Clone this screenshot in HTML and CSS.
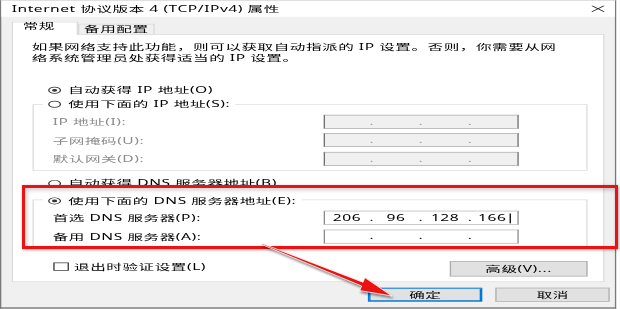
FILE: index.html
```html
<!DOCTYPE html>
<html lang="zh-CN">
<head>
  <meta charset="UTF-8">
  <title>Internet 协议版本 4 (TCP/IPv4) 属性</title>
  <link rel="stylesheet" href="styles.css">
</head>
<body>
  <div class="screen">
    <div class="dialog">
      <div class="titlebar">
        <span>Internet 协议版本 4 (TCP/IPv4) 属性</span>
        <svg class="close" width="10" height="9" viewBox="0 0 10 9"><path d="M0 0L10 9M10 0L0 9" stroke="#222" stroke-width="1" fill="none"/></svg>
      </div>

      <div class="tabs">
        <div class="tab active">常规</div>
        <div class="tab">备用配置</div>
      </div>

      <div class="panel">
        <p class="intro">如果网络支持此功能，则可以获取自动指派的 IP 设置。否则，你需要从网<br>络系统管理员处获得适当的 IP 设置。</p>

        <div class="option first"><span class="choice"><span class="radio on"></span>自动获得 IP 地址(O)</span></div>
        <fieldset class="group">
          <legend><span class="choice"><span class="radio"></span>使用下面的 IP 地址(S):</span></legend>
          <div class="rows">
            <div class="field off">
              <span>IP 地址(I):</span>
              <div class="ip"><span class="seg"></span><span class="dot">.</span><span class="seg"></span><span class="dot">.</span><span class="seg"></span><span class="dot">.</span><span class="seg"></span></div>
            </div>
            <div class="field off">
              <span>子网掩码(U):</span>
              <div class="ip"><span class="seg"></span><span class="dot">.</span><span class="seg"></span><span class="dot">.</span><span class="seg"></span><span class="dot">.</span><span class="seg"></span></div>
            </div>
            <div class="field off">
              <span>默认网关(D):</span>
              <div class="ip"><span class="seg"></span><span class="dot">.</span><span class="seg"></span><span class="dot">.</span><span class="seg"></span><span class="dot">.</span><span class="seg"></span></div>
            </div>
          </div>
        </fieldset>

        <div class="option dns-auto"><span class="choice"><span class="radio"></span>自动获得 DNS 服务器地址(B)</span></div>
        <fieldset class="group dns">
          <legend><span class="choice"><span class="radio on"></span>使用下面的 DNS 服务器地址(E):</span></legend>
          <div class="rows">
            <div class="field">
              <span>首选 DNS 服务器(P):</span>
              <div class="ip"><span class="seg">206</span><span class="dot">.</span><span class="seg">96</span><span class="dot">.</span><span class="seg">128</span><span class="dot">.</span><span class="seg">166<i class="caret"></i></span></div>
            </div>
            <div class="field">
              <span>备用 DNS 服务器(A):</span>
              <div class="ip"><span class="seg"></span><span class="dot">.</span><span class="seg"></span><span class="dot">.</span><span class="seg"></span><span class="dot">.</span><span class="seg"></span></div>
            </div>
          </div>
        </fieldset>

        <div class="panel-bottom">
          <span class="check"><span class="box"></span>退出时验证设置(L)</span>
          <button type="button" class="btn advanced">高级(V)...</button>
        </div>
      </div>

      <div class="buttons">
        <button type="button" class="btn ok">确定</button>
        <button type="button" class="btn">取消</button>
      </div>
    </div>

    <!-- anotacao por cima do print -->
    <div class="highlight"></div>
    <svg class="arrow" width="620" height="309" viewBox="0 0 620 309">
      <polygon points="262.2,243.5 363,282.2 364.9,277.6 392,296 359.7,290.6 361.6,286 261.8,244.5" fill="#ee1111" stroke="#fff" stroke-width="0.8"/>
    </svg>
  </div>
</body>
</html>
```

FILE: styles.css
```css
* {
  box-sizing: border-box;
}

body {
  margin: 0;
  background: #fff;
  font-family: "Noto Sans", "Noto Sans CJK SC", sans-serif;
  font-size: 12px;
  letter-spacing: 0.4px;
  color: #000;
}

.screen {
  position: relative;
  width: 620px;
  height: 309px;
  overflow: hidden;
}

/* o print original foi esticado na horizontal e achatado na vertical */
.dialog {
  width: 474px;
  height: 441px;
  display: flex;
  flex-direction: column;
  background: #f0f0f0;
  border: 1px solid #7a7a7a;
  border-top-color: #c4c4c4;
  border-bottom-width: 2px;
  transform: scale(1.3, 0.7);
  transform-origin: 0 0;
}

.titlebar {
  height: 23px;
  flex: none;
  display: flex;
  align-items: center;
  justify-content: space-between;
  padding: 0 8px;
  background: #fff;
  line-height: 16px;
}

.tabs {
  display: flex;
  align-items: flex-end;
  height: 18.2px;
  margin: 7.4px 0 -1px 7.5px;
  position: relative;
  z-index: 1;
  flex: none;
}

.tab {
  width: 59px;
  height: 15.3px;
  line-height: 12px;
  text-align: center;
  background: #f0f0f0;
  border: 1px solid #d9d9d9;
}

.tab.active {
  width: 51.5px;
  height: 18.2px;
  text-align: left;
  padding-left: 8px;
  background: #fff;
  border-bottom: none;
}

.panel {
  flex: none;
  height: 354.4px;
  margin: 0 7.6px 0 7.5px;
  padding: 9px 12.5px 0 15px;
  background: #fff;
  border: 1px solid #d9d9d9;
}

.intro {
  margin: 0;
  line-height: 16px;
}

.option {
  height: 16px;
  padding-left: 12px;
  display: flex;
  align-items: center;
}

.option.first {
  margin-top: 30px;
}

.option.dns-auto {
  margin-top: 10.5px;
}

.choice {
  display: inline-flex;
  align-items: center;
  gap: 6px;
  line-height: 16px;
}

.radio {
  width: 10px;
  height: 10px;
  border: 1px solid #333;
  border-radius: 50%;
  display: flex;
  align-items: center;
  justify-content: center;
}

.radio.on::after {
  content: "";
  width: 4px;
  height: 4px;
  border-radius: 50%;
  background: #333;
}

.group {
  margin: 4px 0 0;
  padding: 6.3px 0 6px;
  border: 1px solid #dcdcdc;
  min-width: 0;
}

.group.dns {
  margin-top: 5.5px;
}

.group legend {
  margin-left: 7px;
  padding: 0 4px;
  background: #fff;
}

.rows {
  display: flex;
  flex-direction: column;
  gap: 6.5px;
}

.group.dns .rows {
  gap: 7px;
}

.field {
  display: grid;
  grid-template-columns: 208px 150px;
  align-items: center;
  height: 20px;
  padding-left: 15px;
}

.field.off {
  color: #8c8c8c;
}

.ip {
  height: 20px;
  display: flex;
  align-items: center;
  background: #fff;
  border: 1px solid #b4b4b4;
  border-left-color: #8a8a8a;
  border-right-color: #8a8a8a;
}

.field.off .ip {
  background: #f0f0f0;
  border-color: #a8a8a8;
  border-left-color: #6f6f6f;
  border-right-color: #6f6f6f;
}

.seg {
  flex: 1;
  text-align: center;
  line-height: 16px;
}

.dot {
  width: 3px;
  text-align: center;
  line-height: 16px;
}

.field.off .dot {
  color: #9a9a9a;
}

.caret {
  display: inline-block;
  width: 0;
  height: 14px;
  margin-left: 2px;
  border-left: 1px solid #000;
  vertical-align: middle;
}

.panel-bottom {
  display: flex;
  align-items: center;
  justify-content: space-between;
  margin-top: 17.4px;
}

.check {
  display: inline-flex;
  align-items: center;
  gap: 4.5px;
  padding-left: 16px;
  margin-bottom: 7px;
  line-height: 16px;
}

.box {
  width: 12px;
  height: 12px;
  border: 1px solid #333;
  background: #fff;
}

.btn {
  height: 20px;
  padding: 0;
  font: inherit;
  letter-spacing: inherit;
  color: #000;
  background: #e1e1e1;
  border: 1px solid #adadad;
}

.advanced {
  width: 106px;
  height: 21.4px;
}

.buttons {
  display: flex;
  justify-content: flex-end;
  gap: 10px;
  margin-top: 8.4px;
  padding-right: 3.8px;
}

.buttons .btn {
  width: 88px;
}

.btn.ok {
  border-color: #0078d7;
  box-shadow: inset 0 0 0 1px #0078d7;
}

.highlight {
  position: absolute;
  left: 22px;
  top: 185px;
  width: 596px;
  height: 64px;
  border: 3px solid #ee1111;
  box-shadow: 1px 1px 3px rgba(0,0,0,0.35), inset 2px 2px 4px rgba(0,0,0,0.2);
}

.arrow {
  position: absolute;
  left: 0;
  top: 0;
  pointer-events: none;
  filter: drop-shadow(1px 2px 1px rgba(0,0,0,0.45));
}
```
